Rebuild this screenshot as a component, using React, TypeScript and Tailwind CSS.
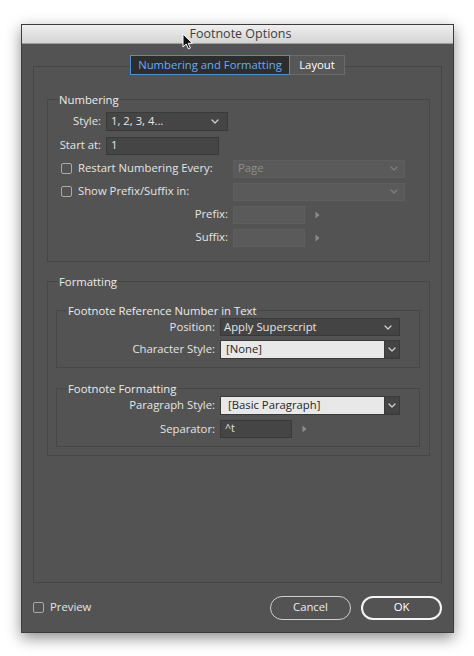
import React from 'react';

function Chevron({ className }: { className?: string }) {
  return (
    <svg
      width="8"
      height="5"
      viewBox="0 0 8 5"
      fill="none"
      stroke="currentColor"
      strokeWidth="1.3"
      strokeLinecap="round"
      strokeLinejoin="round"
      className={className}
    >
      <path d="M1 1l3 3 3-3" />
    </svg>
  );
}

function Triangle() {
  return (
    <svg width="5" height="8" viewBox="0 0 5 8" className="ml-[10px] text-[#8c8c8c]">
      <path d="M0.5 0.5L4.5 4L0.5 7.5Z" fill="currentColor" />
    </svg>
  );
}

function Checkbox() {
  return <div className="w-[11px] h-[11px] border border-[#a9a9a9] rounded-[2px] shrink-0" />;
}

function Group({
  title,
  titleClass,
  className,
  children,
}: {
  title: string;
  titleClass: string;
  className?: string;
  children: React.ReactNode;
}) {
  return (
    <div className={`border border-[#474747] ${className ?? ''}`}>
      <div className={`-mt-[8px] h-[15px] leading-[15px] flex ${titleClass}`}>
        <span className="bg-[#535353] px-[1px] text-[#ececec]">{title}</span>
      </div>
      {children}
    </div>
  );
}

export default function App() {
  return (
    <div className="min-h-screen bg-white pt-[24px] pl-[21px] font-['Open_Sans','Liberation_Sans',sans-serif] font-medium text-[11.3px] text-[#e4e4e4]">
      <div className="relative w-[433px] h-[609px] flex flex-col border border-[#3c3c3c] shadow-[0_5px_14px_rgba(0,0,0,0.45)]">
        {/* Title bar */}
        <div className="h-[19px] shrink-0 flex items-center justify-center bg-gradient-to-b from-[#efefef] to-[#d4d4d4] border-b border-[#9c9c9c] text-[12.5px] font-normal text-[#3e3e3e]">
          <span className="ml-[6px]">Footnote Options</span>
        </div>

        {/* Body */}
        <div className="flex-1 bg-[#535353] flex flex-col px-[11px] pt-[11px]">
          {/* Tabs */}
          <div className="relative z-10 h-[20px] flex justify-center">
            <div className="w-[160px] h-[20px] flex items-center justify-center bg-[#2d2d2e] border border-[#4a8fd8] text-[#64aef3]">
              Numbering and Formatting
            </div>
            <div className="w-[55px] h-[20px] flex items-center justify-center bg-[#575757] border border-l-0 border-[#6b6b6b] text-white">
              Layout
            </div>
          </div>

          {/* Tab panel */}
          <div className="-mt-[9px] h-[517px] shrink-0 border border-[#464646] flex flex-col pl-[13px] pr-[11px] pt-[32px]">
            {/* Numbering */}
            <Group title="Numbering" titleClass="ml-[10px]">
              <div className="pl-[10px] pt-[5px] pb-[15px] flex flex-col gap-[6px]">
                <div className="flex items-center h-[19px]">
                  <span className="w-[43px] text-right">Style:</span>
                  <div className="ml-[5px] w-[122px] h-[19px] flex items-center justify-between bg-[#454545] border border-[#3a3a3a] pl-[4px] pr-[8px]">
                    <span>1, 2, 3, 4...</span>
                    <Chevron className="text-[#cfcfcf]" />
                  </div>
                </div>
                <div className="flex items-center h-[17px]">
                  <span className="w-[43px] text-right whitespace-nowrap">Start at:</span>
                  <div className="ml-[5px] w-[113px] h-[18px] flex items-center bg-[#454545] border border-[#393939] pl-[4px]">
                    1
                  </div>
                </div>
                <div className="flex items-center h-[17px]">
                  <div className="w-[175px] flex items-center">
                    <div className="ml-[3px]">
                      <Checkbox />
                    </div>
                    <span className="ml-[6px] whitespace-nowrap">Restart Numbering Every:</span>
                  </div>
                  <div className="w-[172px] h-[18px] flex items-center justify-between bg-[#5a5a5a] border border-[#5e5e5e] pl-[4px] pr-[6px] text-[#8e8e8e]">
                    <span>Page</span>
                    <Chevron className="text-[#7e7e7e]" />
                  </div>
                </div>
                <div className="flex items-center h-[17px]">
                  <div className="w-[175px] flex items-center">
                    <div className="ml-[3px]">
                      <Checkbox />
                    </div>
                    <span className="ml-[6px] whitespace-nowrap">Show Prefix/Suffix in:</span>
                  </div>
                  <div className="w-[172px] h-[18px] flex items-center justify-end bg-[#5a5a5a] border border-[#5e5e5e] pr-[6px]">
                    <Chevron className="text-[#7e7e7e]" />
                  </div>
                </div>
                <div className="flex items-center h-[17px]">
                  <span className="w-[170px] text-right">Prefix:</span>
                  <div className="ml-[5px] w-[72px] h-[18px] bg-[#5a5a5a] border border-[#5e5e5e]" />
                  <Triangle />
                </div>
                <div className="flex items-center h-[17px]">
                  <span className="w-[170px] text-right">Suffix:</span>
                  <div className="ml-[5px] w-[72px] h-[18px] bg-[#5a5a5a] border border-[#5e5e5e]" />
                  <Triangle />
                </div>
              </div>
            </Group>

            {/* Formatting */}
            <Group title="Formatting" titleClass="ml-[10px]" className="mt-[19px]">
              <div className="pl-[8px] pr-[9px] pt-[21px] pb-[8px] flex flex-col gap-[20px]">
                <Group title="Footnote Reference Number in Text" titleClass="ml-[10px]">
                  <div className="pb-[8px] flex flex-col gap-[4px]">
                    <div className="flex items-center h-[18px]">
                      <span className="w-[158px] text-right">Position:</span>
                      <div className="ml-[5px] w-[180px] h-[18px] flex items-center justify-between bg-[#444444] border border-[#393939] pl-[3px] pr-[7px]">
                        <span>Apply Superscript</span>
                        <Chevron className="text-[#cfcfcf]" />
                      </div>
                    </div>
                    <div className="flex items-center h-[19px]">
                      <span className="w-[158px] text-right">Character Style:</span>
                      <div className="ml-[5px] w-[180px] h-[19px] flex border border-[#393939]">
                        <div className="flex-1 flex items-center bg-[#e8e8e8] text-[#262626] pl-[5px]">
                          [None]
                        </div>
                        <div className="w-[15px] flex items-center justify-center bg-[#444444] border-l border-[#393939]">
                          <Chevron className="text-[#cfcfcf]" />
                        </div>
                      </div>
                    </div>
                  </div>
                </Group>

                <Group title="Footnote Formatting" titleClass="ml-[10px]">
                  <div className="pb-[8px] flex flex-col gap-[5px]">
                    <div className="flex items-center h-[19px]">
                      <span className="w-[158px] text-right">Paragraph Style:</span>
                      <div className="ml-[5px] w-[180px] h-[19px] flex border border-[#393939]">
                        <div className="flex-1 flex items-center bg-[#e8e8e8] text-[#262626] pl-[7px]">
                          [Basic Paragraph]
                        </div>
                        <div className="w-[15px] flex items-center justify-center bg-[#444444] border-l border-[#393939]">
                          <Chevron className="text-[#cfcfcf]" />
                        </div>
                      </div>
                    </div>
                    <div className="flex items-center h-[18px]">
                      <span className="w-[158px] text-right">Separator:</span>
                      <div className="ml-[5px] w-[72px] h-[18px] flex items-center bg-[#454545] border border-[#393939] pl-[4px] text-[10.5px]">
                        ^t
                      </div>
                      <Triangle />
                    </div>
                  </div>
                </Group>
              </div>
            </Group>
          </div>

          {/* Footer */}
          <div className="flex-1 flex items-center justify-between">
            <div className="flex items-center">
              <Checkbox />
              <span className="ml-[6px]">Preview</span>
            </div>
            <div className="flex items-center gap-[10px]">
              <button className="w-[81px] h-[24px] rounded-full border border-[#cfcfcf] text-[#ececec]">
                Cancel
              </button>
              <button className="w-[81px] h-[24px] rounded-full border-2 border-[#f4f4f4] text-white">
                OK
              </button>
            </div>
          </div>
        </div>

        {/* Mouse pointer */}
        <svg
          width="12"
          height="17"
          viewBox="0 0 12 17"
          className="absolute left-[160px] top-[8px]"
        >
          <path
            d="M1 1L1 14L4.2 11L6.4 15.8L8.4 15L6.2 10.3L10.4 10.3Z"
            fill="#111"
            stroke="#fff"
            strokeWidth="1"
            strokeLinejoin="round"
          />
        </svg>
      </div>
    </div>
  );
}
